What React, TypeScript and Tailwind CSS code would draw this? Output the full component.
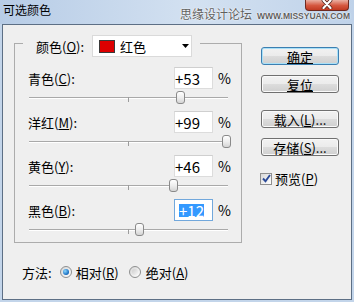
import React from 'react';

type Row = { label: string; hotkey: string; value: number; focused?: boolean };

const rows: Row[] = [
  { label: '青色', hotkey: 'C', value: 53 },
  { label: '洋红', hotkey: 'M', value: 99 },
  { label: '黄色', hotkey: 'Y', value: 46 },
  { label: '黑色', hotkey: 'B', value: 12, focused: true },
];

const Key = ({ k }: { k: string }) => (
  <>
    (<span className="underline underline-offset-[1px]">{k}</span>)
  </>
);

const Slider = ({ value }: { value: number }) => (
  <div className="relative ml-[1px] h-[22px] w-[199px] shrink-0">
    <div className="absolute left-0 right-0 top-[8px] h-[2px] border-b border-white bg-[#a9a9a9]" />
    <div className="absolute left-[99px] top-[8px] h-[5px] w-px bg-[#9c9c9c]" />
    <div
      className="absolute top-[2px] h-[13px] w-[9px] rounded-[3px] border border-[#8a8a8a] bg-[linear-gradient(#ffffff,#ececec_55%,#d4d4d4)]"
      style={{ left: Math.round(99 + value * 0.99 - 4.5) }}
    />
  </div>
);

const Button = ({ children, primary }: { children: React.ReactNode; primary?: boolean }) => (
  <div
    className={
      primary
        ? 'flex h-[18px] w-[78px] shrink-0 items-center justify-center rounded-[3px] border border-[#3c7fb1] bg-[linear-gradient(#f2f2f2,#ebebeb_50%,#dddddd_50%,#cfcfcf)] text-[13px] leading-none shadow-[inset_0_0_0_1px_#a8e0f8]'
        : 'flex h-[18px] w-[78px] shrink-0 items-center justify-center rounded-[3px] border border-[#707070] bg-[linear-gradient(#f2f2f2,#ebebeb_50%,#dddddd_50%,#cfcfcf)] text-[13px] leading-none shadow-[inset_0_0_0_1px_#fafafa]'
    }
  >
    {children}
  </div>
);

const Radio = ({ checked }: { checked?: boolean }) => (
  <div className="flex h-[12px] w-[12px] shrink-0 items-center justify-center rounded-full border border-[#8e8f8f] bg-[linear-gradient(135deg,#d6d6d6,#ffffff)]">
    {checked ? (
      <div className="h-[6px] w-[6px] rounded-full bg-[radial-gradient(circle_at_35%_35%,#8bd8ff,#1b70c2_65%,#0c4d93)]" />
    ) : (
      <div className="h-[6px] w-[6px] rounded-full bg-[linear-gradient(135deg,#cdcdcd,#f6f6f6)]" />
    )}
  </div>
);

export default function App() {
  return (
    <div className="flex h-[302px] w-[354px] flex-col overflow-hidden bg-[#c3d5ea] font-['Noto_Sans_CJK_SC',sans-serif] text-black">
      {/* title bar */}
      <div className="relative flex h-[24px] shrink-0 bg-[linear-gradient(90deg,#b7cce6,#d3e1f1_55%,#bfd2e9)]">
        <div className="pl-[3px] pt-[3px] text-[12px] leading-[14px]">可选颜色</div>
        <div className="absolute left-[180px] top-[7px] flex items-baseline text-[#5f5f5f] [text-shadow:0_0_2px_#ffffff,0_0_1px_#ffffff]">
          <span className="text-[12px] leading-[14px]">思缘设计论坛</span>
          <span className="ml-[5px] font-['Liberation_Sans',sans-serif] text-[8.5px] font-bold leading-none">
            WWW.MISSYUAN.COM
          </span>
        </div>
        <div className="ml-auto mr-[5px] flex h-[11px] w-[44px] items-start justify-center rounded-b-[4px] border border-t-0 border-[#6e2a20] bg-[linear-gradient(#eab0a2,#d5573f_55%,#c13a22)]">
          <svg width="12" height="9" viewBox="0 0 12 9">
            <path d="M2.5 0.5 L9.5 8 M9.5 0.5 L2.5 8" stroke="#4a1a12" strokeWidth="3.6" strokeLinecap="round" />
            <path d="M2.5 0.5 L9.5 8 M9.5 0.5 L2.5 8" stroke="#ffffff" strokeWidth="2.2" strokeLinecap="round" />
          </svg>
        </div>
      </div>

      {/* client area */}
      <div className="mx-[2px] mb-[2px] flex flex-1 border border-[#5d6f85] bg-[#efefef] pl-[11px]">
        <div className="flex w-[228px] shrink-0 flex-col">
          <div className="mt-[18px] flex h-[200px] shrink-0 flex-col border border-[#acacac]">
            <div className="-mt-[9px] ml-[8px] flex h-[22px] w-[177px] shrink-0 items-center bg-[#efefef] pl-[13px]">
              <span className="text-[13px] leading-none">
                颜色<Key k="O" />:
              </span>
              <div className="ml-auto mr-[8px] flex h-[22px] w-[100px] items-center border border-[#dadada] bg-white pl-[6px] pr-[2px]">
                <div className="h-[13px] w-[16px] border border-[#3a3a3a] bg-[#dd0000]" />
                <span className="ml-[5px] text-[13px] leading-none">红色</span>
                <svg className="ml-auto" width="7" height="4" viewBox="0 0 7 4">
                  <path d="M0 0 H7 L3.5 4 Z" fill="#000000" />
                </svg>
              </div>
            </div>

            <div className="mt-[10px] flex flex-col pl-[13px]">
              {rows.map((r) => (
                <div key={r.hotkey} className="flex shrink-0 flex-col">
                  <div className="flex h-[22px] shrink-0 items-center">
                    <span className="w-[146px] text-[13px] leading-none">
                      {r.label}
                      <Key k={r.hotkey} />:
                    </span>
                    {r.focused ? (
                      <div className="flex h-[22px] w-[39px] items-center border border-[#72a8dc] bg-white pl-[4px] text-[15px] leading-none">
                        <span className="inline-block bg-[#3399ff] leading-[13px] text-white">+{r.value}</span>
                      </div>
                    ) : (
                      <div className="flex h-[22px] w-[39px] items-center border border-[#dcdcdc] border-t-[#cfcfcf] bg-white text-[15px] leading-none">
                        +{r.value}
                      </div>
                    )}
                    <span className="ml-[5px] text-[14px] leading-none">%</span>
                  </div>
                  <Slider value={r.value} />
                </div>
              ))}
            </div>
          </div>

          <div className="ml-[8px] mt-[19px] flex h-[20px] items-center text-[13px] leading-none">
            <span>方法:</span>
            <div className="ml-[8px]">
              <Radio checked />
            </div>
            <span className="ml-[4px]">
              相对<Key k="R" />
            </span>
            <div className="ml-[10px]">
              <Radio />
            </div>
            <span className="ml-[5px]">
              绝对<Key k="A" />
            </span>
          </div>
        </div>

        <div className="ml-[19px] flex w-[78px] flex-col">
          <div className="mt-[22px]">
            <Button primary>
              <span className="underline underline-offset-[1px]">确定</span>
            </Button>
          </div>
          <div className="mt-[10px]">
            <Button>
              <span className="underline underline-offset-[1px]">复位</span>
            </Button>
          </div>
          <div className="mt-[17px]">
            <Button>
              载入<Key k="L" />...
            </Button>
          </div>
          <div className="mt-[10px]">
            <Button>
              存储<Key k="S" />...
            </Button>
          </div>
          <div className="-ml-[1px] mt-[16px] flex h-[13px] items-center">
            <div className="flex h-[12px] w-[12px] items-center justify-center border border-[#8f8f8f] bg-[linear-gradient(135deg,#d9d9d9,#ffffff)]">
              <svg width="9" height="9" viewBox="0 0 9 9">
                <path d="M1 4.5 L3.5 7.2 L8 1" stroke="#2b4a98" strokeWidth="1.9" fill="none" />
              </svg>
            </div>
            <span className="ml-[3px] text-[13px] leading-none">
              预览<Key k="P" />
            </span>
          </div>
        </div>
      </div>
    </div>
  );
}
